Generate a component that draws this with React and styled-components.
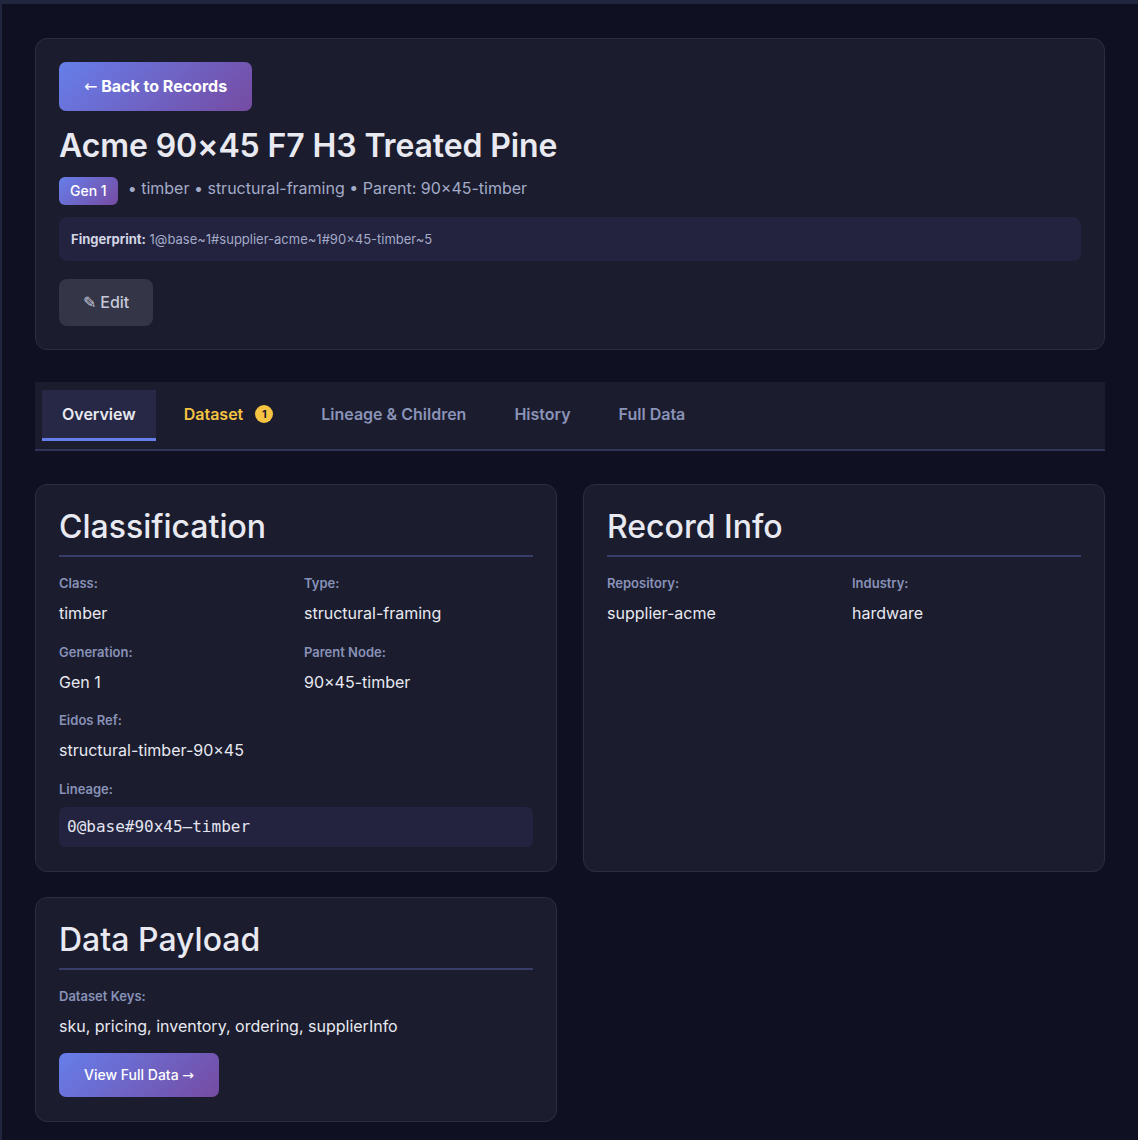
import React from 'react';
import styled, { createGlobalStyle } from 'styled-components';

const GlobalStyle = createGlobalStyle`
    html, body {
        margin: 0;
        padding: 0;
        background: #0f1021;
        font-family: Inter, "Noto Sans", "Liberation Sans", sans-serif;
        color: #e6e8f0;
    }
    * { box-sizing: border-box; }
`

const classification = [
    { label: 'Class:', value: 'timber' },
    { label: 'Type:', value: 'structural-framing' },
    { label: 'Generation:', value: 'Gen 1' },
    { label: 'Parent Node:', value: '90×45-timber' },
    { label: 'Eidos Ref:', value: 'structural-timber-90×45' },
]

const recordInfo = [
    { label: 'Repository:', value: 'supplier-acme' },
    { label: 'Industry:', value: 'hardware' },
]

const tabs = [
    { name: 'Overview', active: true },
    { name: 'Dataset', warn: true, count: 1 },
    { name: 'Lineage & Children' },
    { name: 'History' },
    { name: 'Full Data' },
]

function App() {
    return (
        <>
            <GlobalStyle />
            <Frame>
                <HeaderCard>
                    <GradientButton big><Arrow>←</Arrow> Back to Records</GradientButton>
                    <Title>Acme 90×45 F7 H3 Treated Pine</Title>
                    <Meta>
                        <GenBadge>Gen 1</GenBadge>
                        <MetaText>• timber • structural-framing • Parent: 90×45-timber</MetaText>
                    </Meta>
                    <Fingerprint>
                        <strong>Fingerprint:</strong> 1@base~1#supplier-acme~1#90×45-timber~5
                    </Fingerprint>
                    <EditButton>✎ Edit</EditButton>
                </HeaderCard>

                <TabBar>
                    {tabs.map(t => (
                        <Tab key={t.name} active={t.active} warn={t.warn}>
                            {t.name}
                            {t.count && <CountBadge>{t.count}</CountBadge>}
                        </Tab>
                    ))}
                </TabBar>

                <CardGrid>
                    <Card>
                        <CardTitle>Classification</CardTitle>
                        <Fields>
                            {classification.map(f => (
                                <Field key={f.label}>
                                    <Label>{f.label}</Label>
                                    <Value>{f.value}</Value>
                                </Field>
                            ))}
                            <Field wide>
                                <Label>Lineage:</Label>
                                <Code>0@base#90x45–timber</Code>
                            </Field>
                        </Fields>
                    </Card>
                    <Card>
                        <CardTitle>Record Info</CardTitle>
                        <Fields>
                            {recordInfo.map(f => (
                                <Field key={f.label}>
                                    <Label>{f.label}</Label>
                                    <Value>{f.value}</Value>
                                </Field>
                            ))}
                        </Fields>
                    </Card>
                    <Card>
                        <CardTitle>Data Payload</CardTitle>
                        <Field>
                            <Label>Dataset Keys:</Label>
                            <Value>sku, pricing, inventory, ordering, supplierInfo</Value>
                        </Field>
                        <GradientButton spaced>View Full Data <Arrow>→</Arrow></GradientButton>
                    </Card>
                </CardGrid>
            </Frame>
        </>
    )
}

export default App

const Frame = styled.div`
    min-height: 1140px;
    border-top: 4px solid #21263f;
    border-left: 2px solid #21263f;
    padding: 34px 33px 40px 33px;
`
const HeaderCard = styled.div`
    background: #1b1c2d;
    border: 1px solid #2b2d42;
    border-radius: 12px;
    padding: 23px 23px;
`
const GradientButton = styled.button`
    display: block;
    border: none;
    border-radius: 7px;
    background: linear-gradient(135deg, #667eea 0%, #764ba2 100%);
    color: #ffffff;
    font-family: inherit;
    font-size: ${p => p.big ? '16px' : '14px'};
    font-weight: ${p => p.big ? 700 : 500};
    line-height: ${p => p.big ? '24px' : '20px'};
    padding: 12px 25px;
    margin-top: ${p => p.spaced ? '15px' : '0'};
    cursor: pointer;
`
const Arrow = styled.span`
    font-family: "DejaVu Sans", sans-serif;
    font-weight: 400;
`
const Title = styled.h1`
    margin: 16px 0 0 0;
    font-size: 32px;
    line-height: 38px;
    font-weight: 600;
    letter-spacing: -0.12px;
    color: #e8e9f1;
`
const Meta = styled.div`
    display: flex;
    align-items: flex-start;
    gap: 10px;
    margin-top: 12px;
`
const MetaText = styled.span`
    font-size: 16px;
    line-height: 22px;
    color: #a3abc8;
`
const GenBadge = styled.span`
    background: linear-gradient(135deg, #667eea 0%, #764ba2 100%);
    color: #ffffff;
    font-size: 14px;
    font-weight: 500;
    line-height: 20px;
    padding: 4px 11px;
    border-radius: 6px;
`
const Fingerprint = styled.div`
    margin-top: 12px;
    background: #23233f;
    border-radius: 8px;
    padding: 12px 12px;
    font-size: 13px;
    line-height: 20px;
    color: #a3abc8;
    strong {
        color: #d3d6e4;
        font-weight: 700;
    }
`
const EditButton = styled.button`
    display: block;
    margin-top: 18px;
    border: none;
    border-radius: 8px;
    background: #343647;
    color: #c4c8d9;
    font-family: inherit;
    font-size: 16px;
    line-height: 23px;
    font-weight: 500;
    padding: 12px 24px;
`
const TabBar = styled.div`
    display: flex;
    gap: 8px;
    margin-top: 32px;
    background: #1b1c2d;
    padding: 8px 7px;
    border-bottom: 2px solid #30345a;
`
const Tab = styled.div`
    display: flex;
    align-items: center;
    padding: 14px 20px;
    font-size: 16px;
    line-height: 20px;
    font-weight: 600;
    color: ${p => p.active ? '#e8e9f1' : p.warn ? '#f6c343' : '#8a93b8'};
    background: ${p => p.active ? '#262845' : 'transparent'};
    border-bottom: 3px solid ${p => p.active ? '#667eea' : 'transparent'};
`
const CountBadge = styled.span`
    display: inline-flex;
    align-items: center;
    justify-content: center;
    width: 18px;
    height: 18px;
    margin-left: 12px;
    border-radius: 50%;
    background: #f6c343;
    color: #1b1c2d;
    font-size: 11px;
    font-weight: 700;
`
const CardGrid = styled.div`
    display: grid;
    grid-template-columns: 1fr 1fr;
    column-gap: 26px;
    row-gap: 25px;
    margin-top: 33px;
`
const Card = styled.div`
    background: #1b1c2d;
    border: 1px solid #2b2d42;
    border-radius: 12px;
    padding: 23px 23px 24px 23px;
`
const CardTitle = styled.h2`
    margin: 0 0 16px 0;
    padding-bottom: 9px;
    border-bottom: 2px solid #393d6b;
    font-size: 32px;
    line-height: 38px;
    font-weight: 500;
    color: #e8e9f1;
`
const Fields = styled.div`
    display: grid;
    grid-template-columns: 1fr 1fr;
    column-gap: 16px;
    row-gap: 16.5px;
`
const Field = styled.div`
    grid-column: ${p => p.wide ? '1 / -1' : 'auto'};
`
const Label = styled.div`
    font-size: 13px;
    line-height: 20px;
    font-weight: 600;
    color: #8892b8;
    margin-bottom: 8px;
`
const Value = styled.div`
    font-size: 16px;
    line-height: 24px;
    color: #e8e9f1;
`
const Code = styled.div`
    background: #23233f;
    border-radius: 6px;
    padding: 8px 8px;
    font-family: "DejaVu Sans Mono", "Liberation Mono", monospace;
    font-size: 16px;
    line-height: 24px;
    color: #e2e4ee;
`
